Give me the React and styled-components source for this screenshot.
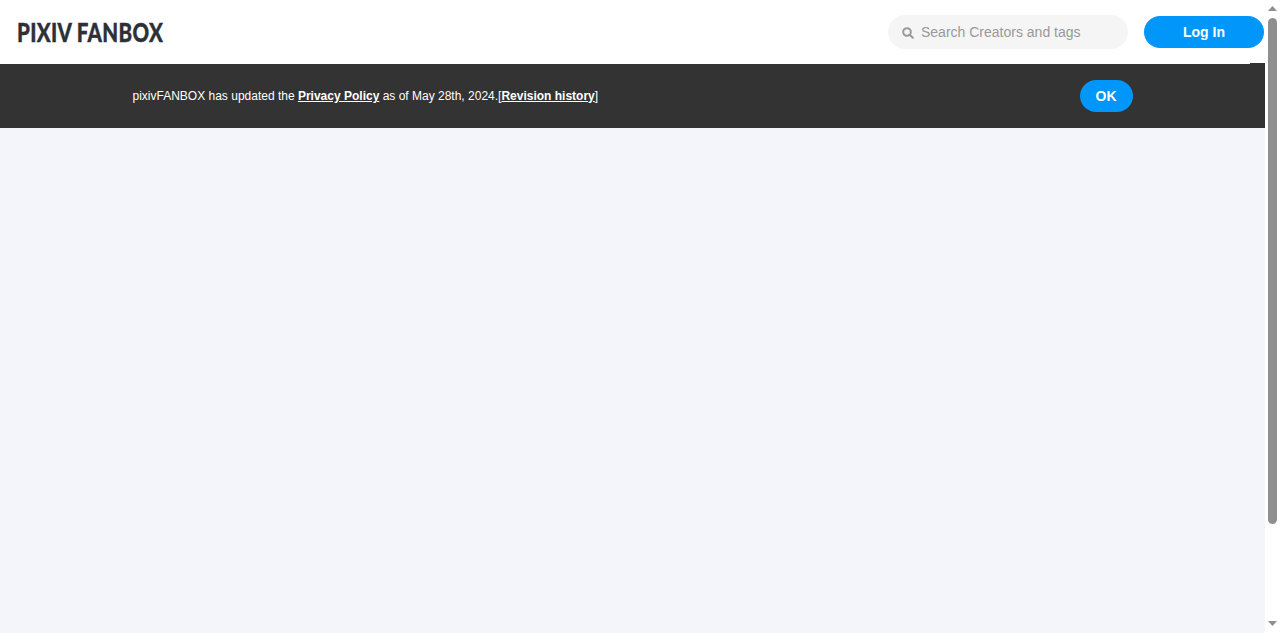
import styled, { createGlobalStyle } from 'styled-components'

const GlobalStyle = createGlobalStyle`
  html, body {
    height: 100%;
    overflow: hidden;
  }
  body {
    margin: 0;
    background: #f3f5fa;
    font-family: "Liberation Sans", Arial, sans-serif;
  }
`

const Frame = styled.div`
  height: 633px;
  display: flex;
`

const Page = styled.div`
  flex: 1;
  min-width: 0;
`

const Header = styled.header`
  position: relative;
  height: 64px;
  background: #fff;
  display: flex;
  align-items: center;
  justify-content: space-between;
  padding: 0 1px 0 17px;
`

const Logo = styled.a`
  margin-top: -2px;
  font-family: Lato, "Liberation Sans", sans-serif;
  font-weight: 900;
  font-size: 27px;
  line-height: 1;
  letter-spacing: 0.45px;
  color: #2d3036;
  -webkit-text-stroke: 0.4px #2d3036;
  white-space: nowrap;
  transform: scaleX(0.76);
  transform-origin: left center;
`

const HeaderRight = styled.div`
  display: flex;
  align-items: center;
  gap: 16px;
`

const Search = styled.div`
  width: 240px;
  height: 34px;
  box-sizing: border-box;
  padding: 0 14px;
  display: flex;
  align-items: center;
  gap: 7px;
  background: #f5f5f5;
  border-radius: 17px;
  color: #999;
  font-size: 14px;
`

const SearchGlyph = styled.svg`
  flex: none;
  width: 12px;
  height: 12px;
  margin-top: 2px;
  fill: none;
  stroke: #999;
  stroke-width: 2;
`

const PillButton = styled.button`
  height: 32px;
  width: ${(p) => p.$width}px;
  padding: 0;
  border: none;
  border-radius: 16px;
  background: #0096fa;
  color: #fff;
  font-family: inherit;
  font-size: 14px;
  font-weight: 700;
`

const Notch = styled.div`
  position: absolute;
  right: 0;
  bottom: 0;
  width: 15px;
  height: 1px;
  background: #333;
`

const Banner = styled.div`
  height: 64px;
  background: #333;
  display: flex;
  justify-content: center;
`

const BannerInner = styled.div`
  width: 1000px;
  display: flex;
  align-items: center;
  justify-content: space-between;
  color: #fff;
  font-size: 12px;
  a {
    color: #fff;
    font-weight: 700;
    text-decoration: underline;
  }
`

const Scrollbar = styled.div`
  width: 15px;
  flex: none;
  background: #fff;
  display: flex;
  flex-direction: column;
  align-items: center;
`

const ScrollArrow = styled.svg`
  flex: none;
  display: block;
  width: 15px;
  height: 16px;
  fill: #8f8f8f;
`

const ScrollTrack = styled.div`
  flex: 1;
  align-self: stretch;
  padding: 2px 3px 0;
`

const ScrollThumb = styled.div`
  height: 506px;
  background: #8f8f8f;
  border-radius: 5px;
`

function SearchIcon() {
  return (
    <SearchGlyph viewBox="0 0 12 12">
      <circle cx="5" cy="5" r="3.8" />
      <path d="M8 8l2.8 2.8" strokeLinecap="round" />
    </SearchGlyph>
  )
}

export default function App() {
  return (
    <Frame>
      <GlobalStyle />
      <Page>
        <Header>
          <Logo>PIXIV FANBOX</Logo>
          <HeaderRight>
            <Search>
              <SearchIcon />
              Search Creators and tags
            </Search>
            <PillButton $width={120}>Log In</PillButton>
          </HeaderRight>
          <Notch />
        </Header>
        <Banner>
          <BannerInner>
            <span>
              pixivFANBOX has updated the <a>Privacy Policy</a> as of May 28th, 2024.[<a>Revision history</a>]
            </span>
            <PillButton $width={53}>OK</PillButton>
          </BannerInner>
        </Banner>
      </Page>
      <Scrollbar>
        <ScrollArrow viewBox="0 0 15 16">
          <path d="M3 11l4.5-5 4.5 5z" />
        </ScrollArrow>
        <ScrollTrack>
          <ScrollThumb />
        </ScrollTrack>
        <ScrollArrow viewBox="0 0 15 16">
          <path d="M3 4l4.5 5 4.5-5z" />
        </ScrollArrow>
      </Scrollbar>
    </Frame>
  )
}
